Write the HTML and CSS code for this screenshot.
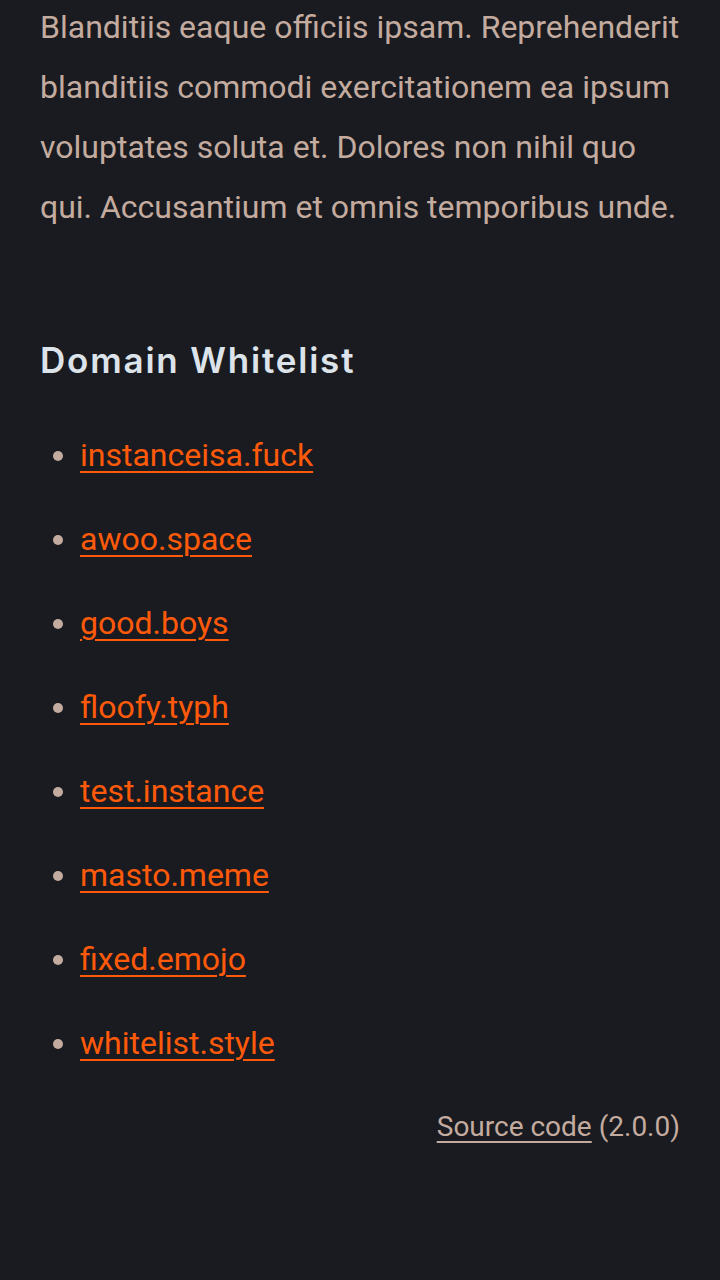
FILE: index.html
```html
<!DOCTYPE html>
<html lang="en">
<head>
<meta charset="utf-8">
<title>Domain Whitelist</title>
<link rel="stylesheet" href="styles.css">
</head>
<body>
<main class="page">
  <p class="intro">Blanditiis eaque officiis ipsam. Reprehenderit blanditiis commodi exercitationem ea ipsum voluptates soluta et. Dolores non nihil quo qui. Accusantium et omnis temporibus unde.</p>
  <h2 class="title">Domain Whitelist</h2>
  <ul class="domains">
    <li><a href="#">instanceisa.fuck</a></li>
    <li><a href="#">awoo.space</a></li>
    <li><a href="#">good.boys</a></li>
    <li><a href="#">floofy.typh</a></li>
    <li><a href="#">test.instance</a></li>
    <li><a href="#">masto.meme</a></li>
    <li><a href="#">fixed.emojo</a></li>
    <li><a href="#">whitelist.style</a></li>
  </ul>
  <footer class="footer"><a href="#">Source code</a> (2.0.0)</footer>
</main>
</body>
</html>
```
FILE: styles.css
```css
html, body {
  margin: 0;
  padding: 0;
  background: #1a1b20;
}
.page {
  padding: 0 40px;
  font-family: Roboto, "Liberation Sans", sans-serif;
  font-size: 32px;
  line-height: 60px;
  color: #c4ab9f;
}
.intro {
  margin: -3px 0 0;
}
.title {
  margin: 99px 0 0;
  font-family: Inter, "Open Sans", sans-serif;
  font-weight: 600;
  font-size: 35px;
  line-height: 48px;
  color: #dde3ea;
  letter-spacing: 1.8px;
}
.domains {
  margin: 41px 0 0;
  padding-left: 40px;
}
.domains li {
  margin-bottom: 24px;
}
.domains a {
  color: #ff5a0a;
  text-decoration: underline;
  text-decoration-thickness: 2px;
  text-underline-offset: 5px;
}
.footer {
  text-align: right;
  font-size: 28px;
}
.footer a {
  color: #c4ab9f;
  text-decoration: underline;
  text-decoration-thickness: 2px;
  text-underline-offset: 5px;
}
```
